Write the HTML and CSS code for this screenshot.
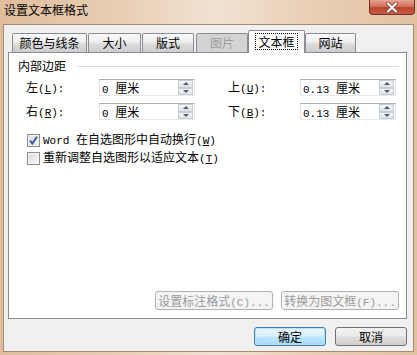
FILE: index.html
```html
<!DOCTYPE html>
<html lang="zh">
<head>
<meta charset="utf-8">
<title>设置文本框格式</title>
<link rel="stylesheet" href="styles.css">
</head>
<body>
<div class="win">
  <div class="titlebar">
    <span class="title">设置文本框格式</span>
    <div class="close">
      <svg width="14" height="11" viewBox="0 0 14 11"><path d="M3 1.5 L11 9.5 M11 1.5 L3 9.5" stroke="#7a3528" stroke-width="3.6" stroke-linecap="round"/><path d="M3 1.5 L11 9.5 M11 1.5 L3 9.5" stroke="#fff" stroke-width="2.2" stroke-linecap="round"/></svg>
    </div>
  </div>
  <div class="body">
    <div class="tabs">
      <div class="tab t1">颜色与线条</div>
      <div class="tab t2">大小</div>
      <div class="tab t3">版式</div>
      <div class="tab t4 disabled">图片</div>
      <div class="tab t5 active"><span class="focus">文本框</span></div>
      <div class="tab t6">网站</div>
    </div>
    <div class="panel">
      <div class="group-head"><span>内部边距</span><div class="rule"></div></div>
      <div class="row">
        <div class="lbl">左<span class="m">(<u>L</u>):</span></div>
        <div class="spin"><div class="val"><span class="m">0&nbsp;</span>厘米</div><div class="btns"><span><i class="up"></i></span><span><i class="down"></i></span></div></div>
        <div class="lbl right">上<span class="m">(<u>U</u>):</span></div>
        <div class="spin"><div class="val"><span class="m">0.13&nbsp;</span>厘米</div><div class="btns"><span><i class="up"></i></span><span><i class="down"></i></span></div></div>
      </div>
      <div class="row row2">
        <div class="lbl">右<span class="m">(<u>R</u>):</span></div>
        <div class="spin"><div class="val"><span class="m">0&nbsp;</span>厘米</div><div class="btns"><span><i class="up"></i></span><span><i class="down"></i></span></div></div>
        <div class="lbl right">下<span class="m">(<u>B</u>):</span></div>
        <div class="spin"><div class="val"><span class="m">0.13&nbsp;</span>厘米</div><div class="btns"><span><i class="up"></i></span><span><i class="down"></i></span></div></div>
      </div>
      <div class="checks">
        <div class="chk-row">
          <span class="box checked"><svg width="11" height="11" viewBox="0 0 11 11"><path d="M2 5.5 L4.3 8.5 L9 1.8" fill="none" stroke="#3d5fa8" stroke-width="2"/></svg></span>
          <span class="chk-text"><span class="m">Word&nbsp;</span>在自选图形中自动换行<span class="m">(<u>W</u>)</span></span>
        </div>
        <div class="chk-row">
          <span class="box"></span>
          <span class="chk-text">重新调整自选图形以适应文本<span class="m">(<u>T</u>)</span></span>
        </div>
      </div>
      <div class="panel-btns">
        <div class="btn disabled">设置标注格式<span class="m">(C)...</span></div>
        <div class="btn disabled">转换为图文框<span class="m">(F)...</span></div>
      </div>
    </div>
    <div class="footer">
      <div class="btn default">确定</div>
      <div class="btn">取消</div>
    </div>
  </div>
</div>
</body>
</html>
```
FILE: styles.css
```css
* { box-sizing: border-box; margin: 0; padding: 0; }
html, body { width: 417px; height: 355px; overflow: hidden; }
body {
  font-family: "Noto Sans CJK SC", "Noto Sans", sans-serif;
  font-size: 12px;
  line-height: 14px;
  color: #000;
  background: #e6c8aa;
}
.m { font-family: "Liberation Mono", "DejaVu Sans Mono", monospace; font-size: 11px; }
u { text-decoration: underline; }

.win {
  width: 417px;
  height: 355px;
  display: flex;
  flex-direction: column;
  background: linear-gradient(90deg, #e0bd9c 0%, #e9cfb6 30%, #f2e2d2 52%, #ead1b8 72%, #e2c1a1 100%);
}
.titlebar {
  height: 24px;
  display: flex;
  justify-content: space-between;
  align-items: flex-start;
  padding-left: 4px;
}
.title { margin-top: 3px; font-size: 12px; line-height: 14px; }
.close {
  width: 46px;
  height: 15px;
  margin-right: 2px;
  border: 1px solid #6e3428;
  border-top: none;
  border-radius: 0 0 4px 4px;
  background: linear-gradient(#e8a292 0%, #d27260 45%, #bd4630 55%, #c95a42 100%);
  display: flex;
  align-items: center;
  justify-content: center;
}

.body {
  flex: 1;
  margin: 0 3px 3px 3px;
  border: 1px solid #a88b6e;
  background: #f0f0f0;
  padding: 5px 6px 5px 4px;
  display: flex;
  flex-direction: column;
}

.tabs {
  display: flex;
  align-items: flex-end;
  height: 22px;
  padding-left: 4px;
  position: relative;
  z-index: 1;
}
.tab {
  height: 19px;
  border: 1px solid #898c95;
  border-bottom: none;
  border-radius: 2px 2px 0 0;
  background: linear-gradient(#fbfbfb 0%, #eeeeee 45%, #dcdcdc 55%, #cdcdcd 100%);
  text-align: center;
  line-height: 17px;
}
.t1 { width: 75px; }
.t2 { width: 53px; margin-left: 1px; }
.t3 { width: 52px; margin-left: 1px; }
.t4 { width: 52px; margin-left: 2px; }
.t5 { width: 57px; }
.t6 { width: 51px; }
.tab.disabled { background: #d3d3d3; color: #9d9d9d; }
.tab.active {
  height: 23px;
  margin-bottom: -1px;
  background: #fff;
  display: flex;
  align-items: center;
  justify-content: center;
  padding-bottom: 1px;
}
.focus {
  border: 1px dotted #000;
  padding: 0 2px;
  line-height: 15px;
}

.panel {
  height: 267px;
  border: 1px solid #898c95;
  background: #fff;
  display: flex;
  flex-direction: column;
}
.group-head {
  display: flex;
  align-items: center;
  padding: 6px 7px 0 9px;
}
.rule { flex: 1; height: 1px; background: #d5dfe5; margin-left: 11px; }

.row {
  display: flex;
  align-items: center;
  height: 17px;
  margin-top: 6px;
  padding-left: 17px;
}
.row2 { margin-top: 7px; }
.lbl { width: 73px; }
.lbl.right { width: 72px; margin-left: 33px; }
.spin {
  width: 96px;
  height: 17px;
  border: 1px solid #abadb3;
  border-color: #abadb3 #dbdfe6 #e3e9ef #e2e3ea;
  display: flex;
  background: #fff;
}
.val { flex: 1; padding-left: 2px; line-height: 15px; white-space: nowrap; }
.btns { width: 16px; display: flex; flex-direction: column; padding: 0 1px 0 0; }
.btns span {
  flex: 1;
  border: 1px solid #c8cdd2;
  background: linear-gradient(#f4f5f6, #dfe2e6);
  display: flex;
  align-items: center;
  justify-content: center;
}
.up { border-left: 3px solid transparent; border-right: 3px solid transparent; border-bottom: 3px solid #4c5d79; }
.down { border-left: 3px solid transparent; border-right: 3px solid transparent; border-top: 3px solid #4c5d79; }

.checks { margin-top: 11px; padding-left: 18px; }
.chk-row { display: flex; align-items: center; height: 18px; }
.box {
  width: 13px;
  height: 13px;
  border: 1px solid #8e8f8f;
  background: linear-gradient(135deg, #dcdcdc, #f6f6f6);
  box-shadow: inset 0 0 0 1px #f4f4f4;
  display: flex;
  align-items: center;
  justify-content: center;
}
.chk-text { margin-left: 3px; white-space: nowrap; }

.panel-btns {
  margin-top: auto;
  display: flex;
  justify-content: flex-end;
  gap: 8px;
  padding: 0 7px 8px 0;
}
.btn {
  width: 118px;
  height: 19px;
  border: 1px solid #707070;
  border-radius: 3px;
  background: linear-gradient(#f2f2f2 0%, #ebebeb 45%, #dddddd 55%, #cfcfcf 100%);
  text-align: center;
  line-height: 17px;
  white-space: nowrap;
}
.btn.disabled { border-color: #adb2b5; background: #f4f4f4; color: #9a9a9a; }

.footer {
  margin-top: 8px;
  display: flex;
  justify-content: flex-end;
  gap: 9px;
}
.footer .btn { width: 72px; }
.btn.default {
  border-color: #3c7fb1;
  background: linear-gradient(#eaf6fd 0%, #d9f0fc 45%, #bee6fd 55%, #a7d9f5 100%);
  box-shadow: inset 0 0 0 1px #b9e3f9;
}
```
